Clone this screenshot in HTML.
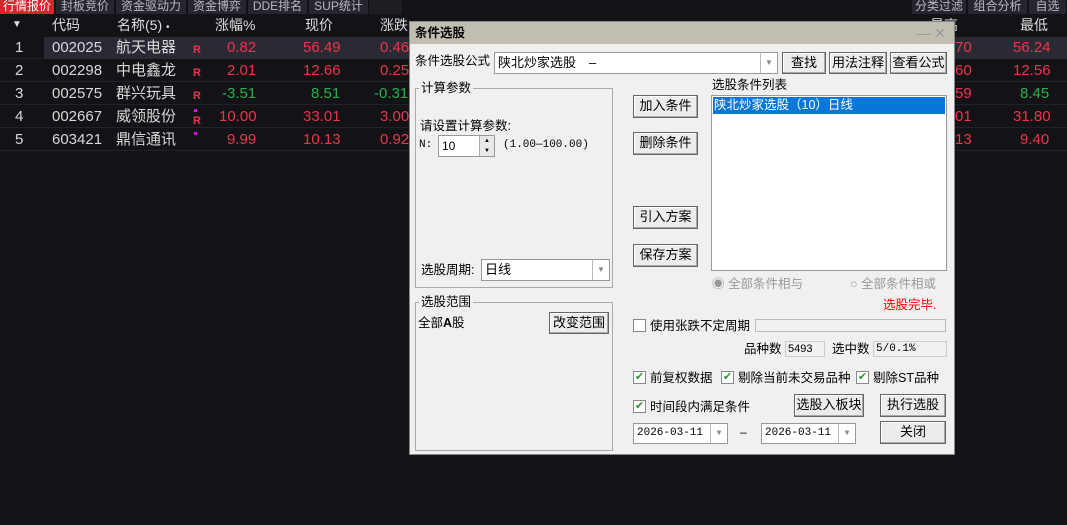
<!DOCTYPE html>
<html><head><meta charset="utf-8"><style>
*{margin:0;padding:0;box-sizing:border-box}
body{width:1067px;height:525px;background:#131317;overflow:hidden;position:relative;font-family:"Liberation Sans","Noto Sans CJK SC",sans-serif;}
.a{position:absolute;white-space:nowrap}
.tab{position:absolute;top:0;height:14px;background:#262630;color:#b8b8c0;font-size:12px;line-height:13px;text-align:center;border-right:1px solid #111}
.hd{position:absolute;top:14px;height:23px;color:#ddd;font-size:14px;line-height:22px}
.row{position:absolute;left:0;width:1067px;height:22px;font-size:15px;line-height:22px;border-bottom:1px solid #222228}
.c{position:absolute;top:0}
.r{color:#f0334a}.g{color:#27b04a}.w{color:#d8d8d8}
.dlg{position:absolute;left:409px;top:21px;width:546px;height:434px;background:#f0f0f0;border:1px solid #888;font-size:12px;color:#000;line-height:15px}
.btn{position:absolute;background:#ececec;border:1px solid #666;box-shadow:inset -1px -1px 0 #aaa,inset 1px 1px 0 #fff;text-align:center;font-size:13px;line-height:20px}
.box{position:absolute;background:#fff;border:1px solid #999}
.grp{position:absolute;border:1px solid #aaa}
.gl{position:absolute;background:#f0f0f0;font-size:12.5px;padding:0 2px}
.cb{position:absolute;width:13px;height:13px;border:1px solid #888;background:#fff;font-size:11px;line-height:11px;color:#2a9a2a;text-align:center}
.dd{position:absolute;top:0;right:0;width:17px;height:100%;border-left:1px solid #bbb;color:#888;font-size:8px;text-align:center}
</style></head><body>
<div class="tab" style="left:0;width:55px;background:#d9242c;color:#fff">行情报价</div>
<div class="tab" style="left:56px;width:59px">封板竞价</div>
<div class="tab" style="left:116px;width:71px">资金驱动力</div>
<div class="tab" style="left:188px;width:59px">资金博弈</div>
<div class="tab" style="left:248px;width:60px">DDE排名</div>
<div class="tab" style="left:309px;width:60px">SUP统计</div>
<div class="tab" style="left:369px;width:34px;background:#1d1d24"></div>
<div class="tab" style="left:912px;width:55px">分类过滤</div>
<div class="tab" style="left:968px;width:60px">组合分析</div>
<div class="tab" style="left:1029px;width:38px">自选</div>

<div class="hd" style="left:12px;font-size:10px">▼</div>
<div class="hd" style="left:52px">代码</div>
<div class="hd" style="left:117px">名称(5)  <span style="font-size:10px">•</span></div>
<div class="hd" style="left:215px">涨幅%</div>
<div class="hd" style="left:305px">现价</div>
<div class="hd" style="left:380px">涨跌</div>
<div class="hd" style="left:930px">最高</div>
<div class="hd" style="left:1020px">最低</div>

<div class="row" style="top:37px"><div class="c" style="left:44px;width:1023px;height:22px;background:#2a2a34"></div>
<div class="c w" style="left:15px">1</div><div class="c w" style="left:52px">002025</div><div class="c w" style="left:116px">航天电器</div><div class="c r" style="left:193px;font-size:11px;font-weight:bold;top:2px">R</div><div class="c r" style="left:227px">0.82</div><div class="c r" style="left:303px">56.49</div><div class="c r" style="left:380px">0.46</div><div class="c r" style="left:955px">70</div><div class="c r" style="left:1013px">56.24</div></div>
<div class="row" style="top:60px"><div class="c w" style="left:15px">2</div><div class="c w" style="left:52px">002298</div><div class="c w" style="left:116px">中电鑫龙</div><div class="c r" style="left:193px;font-size:11px;font-weight:bold;top:2px">R</div><div class="c r" style="left:227px">2.01</div><div class="c r" style="left:303px">12.66</div><div class="c r" style="left:380px">0.25</div><div class="c r" style="left:955px">60</div><div class="c r" style="left:1013px">12.56</div></div>
<div class="row" style="top:83px"><div class="c w" style="left:15px">3</div><div class="c w" style="left:52px">002575</div><div class="c w" style="left:116px">群兴玩具</div><div class="c r" style="left:193px;font-size:11px;font-weight:bold;top:2px">R</div><div class="c g" style="left:222px">-3.51</div><div class="c g" style="left:311px">8.51</div><div class="c g" style="left:374px">-0.31</div><div class="c r" style="left:955px">59</div><div class="c g" style="left:1020px">8.45</div></div>
<div class="row" style="top:106px"><div class="c w" style="left:15px">4</div><div class="c w" style="left:52px">002667</div><div class="c w" style="left:116px">威领股份</div><div class="c" style="left:194px;top:3px;width:3px;height:3px;background:#e0e"></div><div class="c r" style="left:193px;font-size:11px;font-weight:bold;top:4px">R</div><div class="c r" style="left:219px">10.00</div><div class="c r" style="left:303px">33.01</div><div class="c r" style="left:380px">3.00</div><div class="c r" style="left:955px">01</div><div class="c r" style="left:1013px">31.80</div></div>
<div class="row" style="top:129px"><div class="c w" style="left:15px">5</div><div class="c w" style="left:52px">603421</div><div class="c w" style="left:116px">鼎信通讯</div><div class="c" style="left:194px;top:3px;width:3px;height:3px;background:#e0e"></div><div class="c r" style="left:227px">9.99</div><div class="c r" style="left:303px">10.13</div><div class="c r" style="left:380px">0.92</div><div class="c r" style="left:955px">13</div><div class="c r" style="left:1020px">9.40</div></div>

<div class="dlg">
<div class="a" style="left:0;top:0;width:544px;height:22px;background:#c2bdb1;font-weight:bold;font-size:12.5px;line-height:22px;padding-left:5px">条件选股<span style="position:absolute;right:8px;color:#999;font-weight:normal;font-size:14px">—  ✕</span></div>
<div class="a" style="left:5px;top:32px;font-size:12.5px">条件选股公式</div>
<div class="box" style="left:84px;top:30px;width:284px;height:22px;font-size:13px;line-height:20px;padding-left:3px">陕北炒家选股　–<div class="dd" style="line-height:20px">▼</div></div>
<div class="btn" style="left:372px;top:30px;width:44px;height:22px">查找</div>
<div class="btn" style="left:419px;top:30px;width:58px;height:22px">用法注释</div>
<div class="btn" style="left:480px;top:30px;width:57px;height:22px">查看公式</div>

<div class="grp" style="left:5px;top:66px;width:198px;height:200px"></div>
<div class="gl" style="left:9px;top:59px">计算参数</div>
<div class="a" style="left:10px;top:97px;font-size:12.5px">请设置计算参数:</div>
<div class="a" style="left:9px;top:116px;font-size:11px;font-family:'Liberation Mono',monospace">N:</div>
<div class="box" style="left:28px;top:113px;width:57px;height:22px;font-size:12px;line-height:20px;padding-left:3px">10<div style="position:absolute;right:0;top:0;width:15px;height:20px;background:#e8e8e8;border-left:1px solid #aaa;font-size:6px;line-height:10px;text-align:center">▲<br>▼</div></div>
<div class="a" style="left:93px;top:116px;font-size:11px;font-family:'Liberation Mono',monospace">(1.00—100.00)</div>
<div class="a" style="left:11px;top:241px;font-size:12.5px">选股周期:</div>
<div class="box" style="left:71px;top:237px;width:129px;height:22px;font-size:13px;line-height:20px;padding-left:3px">日线<div class="dd" style="line-height:20px">▼</div></div>

<div class="grp" style="left:5px;top:280px;width:198px;height:149px"></div>
<div class="gl" style="left:9px;top:273px">选股范围</div>
<div class="a" style="left:8px;top:294px;font-size:12.5px">全部<b>A</b>股</div>
<div class="btn" style="left:139px;top:290px;width:60px;height:22px">改变范围</div>

<div class="btn" style="left:223px;top:73px;width:65px;height:23px">加入条件</div>
<div class="btn" style="left:223px;top:110px;width:65px;height:23px">删除条件</div>
<div class="btn" style="left:223px;top:184px;width:65px;height:23px">引入方案</div>
<div class="btn" style="left:223px;top:222px;width:65px;height:23px">保存方案</div>

<div class="a" style="left:302px;top:56px;font-size:12.5px">选股条件列表</div>
<div class="box" style="left:301px;top:73px;width:236px;height:176px"><div style="margin:1px;height:17px;background:#0a77d8;color:#fff;font-size:12.5px;line-height:17px;padding-left:1px">陕北炒家选股（10）日线</div></div>
<div class="a" style="left:302px;top:255px;color:#999;font-size:12.5px">◉ 全部条件相与</div>
<div class="a" style="left:440px;top:255px;color:#999;font-size:12.5px">○ 全部条件相或</div>
<div class="a" style="left:473px;top:276px;color:#f00;font-size:12.5px">选股完毕.</div>

<div class="cb" style="left:223px;top:297px"></div>
<div class="a" style="left:240px;top:297px;font-size:12.5px">使用张跌不定周期</div>
<div class="a" style="left:345px;top:297px;width:191px;height:13px;border:1px solid #bbb"></div>
<div class="a" style="left:334px;top:320px;font-size:12.5px">品种数</div>
<div class="a" style="left:375px;top:319px;width:40px;height:16px;border:1px solid #ccc;font-size:11px;line-height:14px;padding-left:2px">5493</div>
<div class="a" style="left:422px;top:320px;font-size:12.5px">选中数</div>
<div class="a" style="left:463px;top:319px;width:74px;height:16px;border:1px solid #ccc;font-size:11px;line-height:14px;padding-left:2px;font-family:'Liberation Mono',monospace">5/0.1%</div>

<div class="cb" style="left:223px;top:349px">✔</div><div class="a" style="left:240px;top:349px;font-size:12.5px">前复权数据</div>
<div class="cb" style="left:311px;top:349px">✔</div><div class="a" style="left:328px;top:349px;font-size:12.5px">剔除当前未交易品种</div>
<div class="cb" style="left:446px;top:349px">✔</div><div class="a" style="left:463px;top:349px;font-size:12.5px">剔除ST品种</div>
<div class="cb" style="left:223px;top:378px">✔</div><div class="a" style="left:240px;top:378px;font-size:12.5px">时间段内满足条件</div>
<div class="btn" style="left:384px;top:372px;width:70px;height:23px">选股入板块</div>
<div class="btn" style="left:470px;top:372px;width:66px;height:23px">执行选股</div>
<div class="box" style="left:223px;top:401px;width:95px;height:21px;font-size:11px;line-height:19px;padding-left:3px;font-family:'Liberation Mono',monospace">2026-03-11<div class="dd" style="line-height:19px">▼</div></div>
<div class="a" style="left:330px;top:403px">–</div>
<div class="box" style="left:351px;top:401px;width:95px;height:21px;font-size:11px;line-height:19px;padding-left:3px;font-family:'Liberation Mono',monospace">2026-03-11<div class="dd" style="line-height:19px">▼</div></div>
<div class="btn" style="left:470px;top:399px;width:66px;height:23px">关闭</div>
</div>
</body></html>
